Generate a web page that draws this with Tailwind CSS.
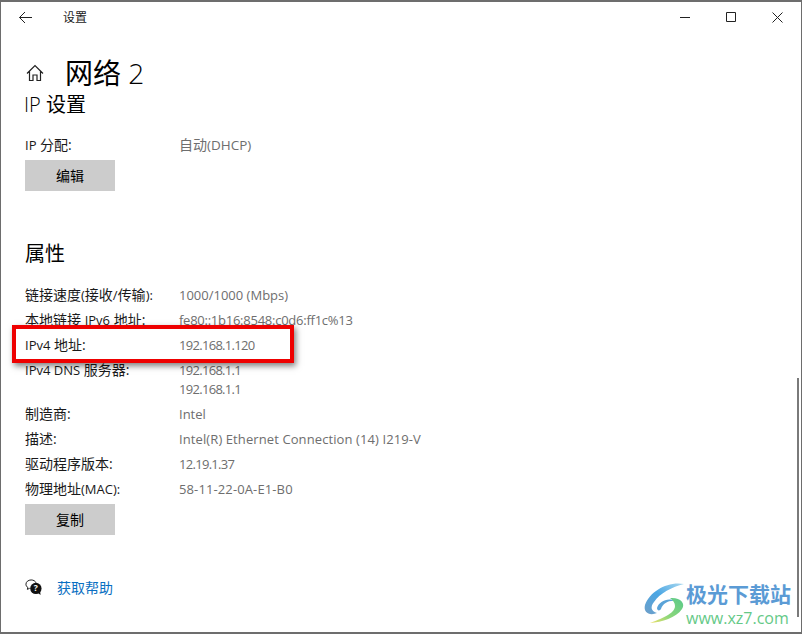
<!DOCTYPE html>
<html lang="zh-CN">
<head>
    <meta charset="UTF-8">
    <title>设置</title>
    <script src="https://cdn.jsdelivr.net/npm/@tailwindcss/browser@4"></script>
</head>
<body class="bg-white">
    <div class="relative w-[802px] h-[634px] overflow-hidden bg-white border-t-2 border-l-1 border-r-1 border-b-2 border-[#6d6d6d] text-[14px] text-[#1a1a1a] font-['Open_Sans','Noto_Sans_CJK_SC',sans-serif]">

        <!-- title bar -->
        <div class="flex items-center h-[30px]">
            <svg class="ml-[17px] w-[15px] h-[15px]" viewBox="0 0 15 15" fill="none" stroke="#222" stroke-width="1">
                <path d="M1.5 7.5H14M7 2L1.5 7.5L7 13"/>
            </svg>
            <span class="ml-[30px] mt-[2px] text-[12px] leading-none">设置</span>
            <div class="ml-auto flex items-center gap-[36px] mr-[18px]">
                <svg class="w-[10px] h-[10px]" viewBox="0 0 10 10" stroke="#222" fill="none"><path d="M0 5.5H10"/></svg>
                <svg class="w-[10px] h-[10px]" viewBox="0 0 10 10" stroke="#222" fill="none"><path d="M.5 .5H9.5V9.5H.5Z"/></svg>
                <svg class="w-[11px] h-[11px]" viewBox="0 0 11 11" stroke="#222" fill="none"><path d="M.5 .5L10.5 10.5M10.5 .5L.5 10.5"/></svg>
            </div>
        </div>

        <!-- page heading -->
        <div class="flex items-center h-[54px] mt-[14px] pl-[25px]">
            <svg class="w-[18px] h-[18px]" viewBox="0 0 18 18" fill="none" stroke="#222" stroke-width="1.2">
                <path d="M1 9.5L9 1.5L17 9.5M3.5 7.5V16.5H7V11H11V16.5H14.5V7.5"/>
            </svg>
            <h1 class="ml-[21px] text-[28px] leading-none text-black">网络 <span class="font-light">2</span></h1>
        </div>

        <!-- settings content -->
        <div class="pl-[24px] pr-[20px]">
            <h2 class="h-[26px] -mt-[8px] -ml-[1px] text-[20px] leading-[26px] text-black"><span class="font-light">IP</span> 设置</h2>

            <div class="grid grid-cols-[154px_1fr] h-[25px] mt-[15px] leading-[23px]">
                <span><span class="text-[13px]">IP</span> 分配:</span>
                <span class="text-[#6e6e6e]">自动<span class="text-[13.5px]">(DHCP)</span></span>
            </div>
            <button class="block w-[90px] h-[31px] mt-[2px] bg-[#cccccc] text-black">编辑</button>

            <h2 class="h-[26px] mt-[50px] text-[20px] leading-[26px] text-black">属性</h2>

            <div class="mt-[16px] leading-[25px]">
                <div class="grid grid-cols-[154px_1fr] h-[25px]">
                    <span class="leading-[23px]">链接速度<span class="text-[13px]">(</span>接收<span class="text-[13px]">/</span>传输<span class="text-[13px]">):</span></span>
                    <span class="text-[#6e6e6e] text-[13px]">1000/1000 (Mbps)</span>
                </div>
                <div class="grid grid-cols-[154px_1fr] h-[25px]">
                    <span class="leading-[23px]">本地链接 <span class="text-[13px]">IPv6</span> 地址:</span>
                    <span class="text-[#6e6e6e] text-[13px] tracking-[-0.25px]">fe80::1b16:8548:c0d6:ff1c%13</span>
                </div>
                <div class="grid grid-cols-[154px_1fr] h-[25px]">
                    <span class="leading-[23px]"><span class="text-[13px]">IPv4</span> 地址:</span>
                    <span class="text-[#6e6e6e] text-[13px] tracking-[-0.7px]">192.168.1.120</span>
                </div>
                <div class="grid grid-cols-[154px_1fr] h-[44px]">
                    <span class="leading-[23px]"><span class="text-[13px]">IPv4 DNS</span> 服务器:</span>
                    <div class="text-[#6e6e6e] text-[13px] tracking-[-0.7px] leading-[19px] pt-[3px]">
                        <div>192.168.1.1</div>
                        <div>192.168.1.1</div>
                    </div>
                </div>
                <div class="grid grid-cols-[154px_1fr] h-[25px]">
                    <span class="leading-[23px]">制造商:</span>
                    <span class="text-[#6e6e6e] text-[13px]">Intel</span>
                </div>
                <div class="grid grid-cols-[154px_1fr] h-[25px]">
                    <span class="leading-[23px]">描述:</span>
                    <span class="text-[#6e6e6e] text-[13px] tracking-[0.1px]">Intel(R) Ethernet Connection (14) I219-V</span>
                </div>
                <div class="grid grid-cols-[154px_1fr] h-[25px]">
                    <span class="leading-[23px]">驱动程序版本:</span>
                    <span class="text-[#6e6e6e] text-[13px] tracking-[-0.7px]">12.19.1.37</span>
                </div>
                <div class="grid grid-cols-[154px_1fr] h-[25px]">
                    <span class="leading-[23px]">物理地址<span class="text-[13px]">(MAC):</span></span>
                    <span class="text-[#6e6e6e] text-[13px] tracking-[0.12px]">58-11-22-0A-E1-B0</span>
                </div>
            </div>
            <button class="block w-[90px] h-[31px] mt-[2px] bg-[#cccccc] text-black">复制</button>

            <div class="flex items-center h-[18px] mt-[43px]">
                <svg class="w-[17px] h-[17px]" viewBox="0 0 18 18">
                    <path d="M6.5 1C3.5 1 1 3 1 5.5C1 7 1.8 8.2 3 9L2.5 11L5 9.8" fill="none" stroke="#111" stroke-width="1"/>
                    <path d="M6.5 1C9 1 11 2.2 11.6 4" fill="none" stroke="#111" stroke-width="1"/>
                    <circle cx="11.5" cy="10" r="6" fill="#111"/>
                    <path d="M14 15L16.5 17L16 13Z" fill="#111"/>
                    <text x="11.5" y="13" text-anchor="middle" font-size="9" font-weight="700" fill="#fff">?</text>
                </svg>
                <a class="ml-[15px] text-[#0a6fc2]">获取帮助</a>
            </div>
        </div>

        <!-- scrollbar thumb -->
        <div class="absolute left-[796px] top-[376px] w-[2px] h-[239px] bg-[#7a7a7a]"></div>

        <!-- red annotation box -->
        <div class="absolute left-[11px] top-[323px] w-[282px] h-[38px] border-4 border-[#ee0000] shadow-[2px_3px_6px_rgba(0,0,0,0.5)]"></div>

        <!-- watermark -->
        <div class="absolute left-[641px] top-[578px] flex items-start">
            <svg class="w-[44px] h-[44px]" viewBox="0 0 44 44" fill="none">
                <defs>
                    <linearGradient id="swirl-blue" x1="1" y1="0" x2="0" y2="1">
                        <stop offset="0" stop-color="#a9d8ef"/>
                        <stop offset="0.5" stop-color="#4aa6e4"/>
                        <stop offset="1" stop-color="#6f9fc8"/>
                    </linearGradient>
                    <linearGradient id="swirl-green" x1="1" y1="0" x2="0" y2="1">
                        <stop offset="0" stop-color="#58c98a"/>
                        <stop offset="0.6" stop-color="#8ed77a"/>
                        <stop offset="1" stop-color="#efe06a"/>
                    </linearGradient>
                </defs>
                <path d="M42 4C26 1 8 11 3 25C1 33 8 36 15 33C9 31 8 27 12 22C18 13 30 7 42 4Z" fill="url(#swirl-blue)"/>
                <path d="M15 28C17 21 26 17 34 21C27 20 21 23 19 29C18 31 15 31 15 28Z" fill="#5aa3d8"/>
                <path d="M28 18C38 17 44 23 40 29C34 38 20 42 8 43C18 39 33 34 33 26C33 23 31 20 28 18Z" fill="url(#swirl-green)"/>
            </svg>
            <div>
                <div class="mt-[2px] text-[21px] h-[24px] leading-[24px] font-bold text-[#5b9bd5]">极光下载站</div>
                <div class="mt-[3px] text-[16px] h-[18px] leading-[18px] text-[#65c987]">www.xz7.com</div>
            </div>
        </div>
    </div>
</body>
</html>
